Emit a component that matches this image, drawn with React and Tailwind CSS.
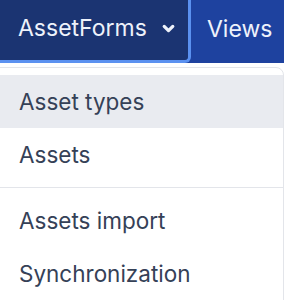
const groups = [
  ['Asset types', 'Assets'],
  ['Assets import', 'Synchronization'],
]

export default function App() {
  return (
    <div className="w-[284px] h-[300px] overflow-hidden bg-white" style={{ fontFamily: 'Inter, "Noto Sans", sans-serif' }}>
      {/* Top nav */}
      <div className="flex h-[63px] bg-[#1e429f] text-[23px] text-[#eef2fb]">
        <button className="-mt-2 -ml-1 flex w-[195px] items-center rounded-br-md border-b-[3px] border-r-[3px] border-[#5b91f0] bg-[#1b3472] pl-[22px] pt-1">
          <span>AssetForms</span>
          <svg className="ml-[14px] h-[15px] w-[15px]" viewBox="0 0 14 14" fill="none" stroke="currentColor" strokeWidth="3" strokeLinecap="round" strokeLinejoin="round">
            <path d="M3 5l4 4 4-4" />
          </svg>
        </button>
        <div className="flex items-center pl-4 pb-1">Views</div>
      </div>

      {/* Dropdown */}
      <div className="mt-1 -ml-px rounded-tr-lg border border-[#e3e5ea] bg-white py-[7px] text-[22.5px] text-[#354157]">
        {groups.map((items, gi) => (
          <div key={gi}>
            {gi > 0 && <div className="my-[6px] h-px bg-[#e3e5ea]" />}
            {items.map(label => (
              <div
                key={label}
                className={`flex h-[53px] items-center pl-[19px] ${label === 'Asset types' ? 'bg-[#e9ebf0]' : ''}`}
              >
                {label}
              </div>
            ))}
          </div>
        ))}
      </div>
    </div>
  )
}
